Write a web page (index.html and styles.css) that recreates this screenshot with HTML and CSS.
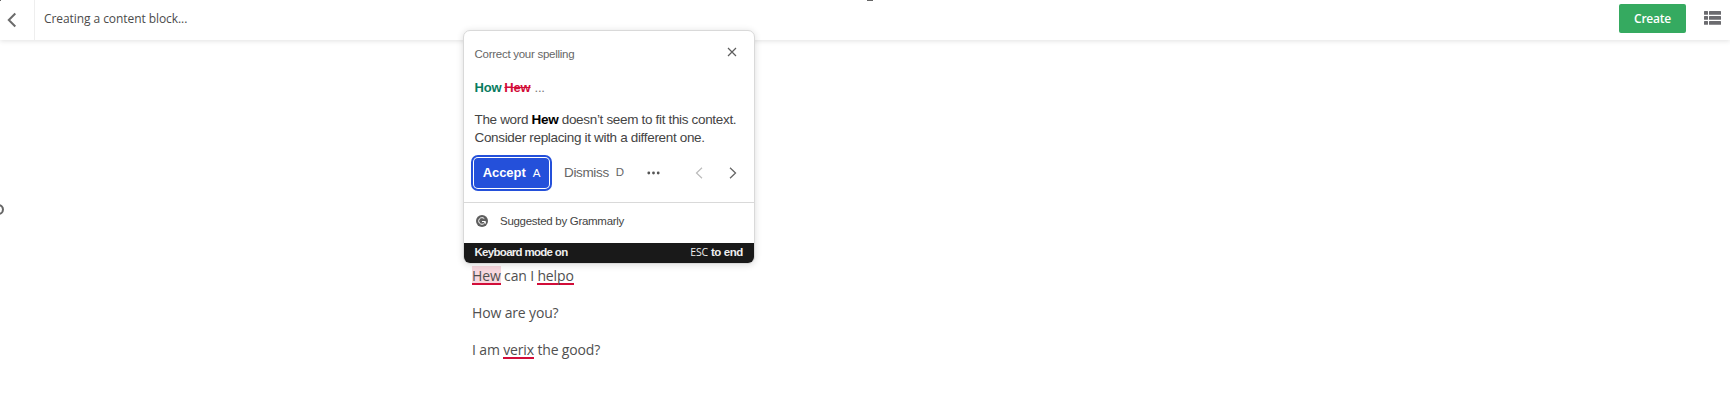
FILE: index.html
```html
<!DOCTYPE html>
<html lang="en">
<head>
<meta charset="utf-8">
<title>Creating a content block</title>
<link rel="stylesheet" href="styles.css">
</head>
<body>
<header class="topbar">
  <div class="back"><svg width="10" height="16" viewBox="0 0 10 16"><path d="M8.3 1.5 1.8 8l6.5 6.5" fill="none" stroke="#6b6b6b" stroke-width="2"/></svg></div>
  <div class="page-title"><span>Creating a content block...</span></div>
  <button class="create">Create</button>
  <svg class="list-icon" width="17" height="14" viewBox="0 0 17 14" fill="#6b6b6f"><rect width="4" height="3.7" rx=".5"/><rect x="5" width="12" height="3.7" rx=".5"/><rect y="5" width="4" height="3.7" rx=".5"/><rect x="5" y="5" width="12" height="3.7" rx=".5"/><rect y="10" width="4" height="3.7" rx=".5"/><rect x="5" y="10" width="12" height="3.7" rx=".5"/></svg>
</header>
<main class="editor">
  <p><span class="error active">Hew</span> can I <span class="error">helpo</span></p>
  <p>How are you?</p>
  <p>I am <span class="error">verix</span> the good?</p>
</main>
<section class="card">
  <div class="card-head"><span class="heading">Correct your spelling</span><svg width="10" height="10" viewBox="0 0 10 10"><path d="M1 1l8 8M9 1 1 9" stroke="#5d5d5d" stroke-width="1.2"/></svg></div>
  <div class="change"><b class="new">How</b><b class="old">Hew</b><span class="rest">...</span></div>
  <div class="explain"><div class="line1">The word <b>Hew</b> doesn’t seem to fit this context.</div><div class="line2">Consider replacing it with a different one.</div></div>
  <div class="actions">
    <button class="accept"><b>Accept</b><span>A</span></button>
    <div class="dismiss"><span>Dismiss</span><span class="key">D</span></div>
    <svg class="more" width="13" height="4" viewBox="0 0 13 4" fill="#555"><circle cx="1.8" cy="2" r="1.4"/><circle cx="6.5" cy="2" r="1.4"/><circle cx="11.2" cy="2" r="1.4"/></svg>
    <svg class="prev" width="8" height="12" viewBox="0 0 8 12"><path d="M7 .8 1.5 6 7 11.2" fill="none" stroke="#bbb" stroke-width="1.2"/></svg>
    <svg class="next" width="8" height="12" viewBox="0 0 8 12"><path d="M1 .8 6.5 6 1 11.2" fill="none" stroke="#666" stroke-width="1.3"/></svg>
  </div>
  <div class="source"><svg width="12" height="12" viewBox="0 0 12 12"><circle cx="6" cy="6" r="6" fill="#5e5e5e"/><path d="M8.3 3.6A3.3 3.3 0 1 0 9.2 6.7M6 6.5h3.3v2.2" fill="none" stroke="#fff" stroke-width="1"/></svg><span>Suggested by Grammarly</span></div>
  <div class="keyboard"><span class="mode">Keyboard mode on</span><span class="esc"><span class="esc-key">ESC</span><b>to end</b></span></div>
</section>
<i class="edge-corner"></i><i class="edge-top"></i><i class="edge-left"></i>
</body>
</html>
```
FILE: styles.css
```css
* { box-sizing: border-box; }
body { margin: 0; height: 404px; overflow: hidden; position: relative; background: #fff; font-family: "Liberation Sans", Arial, sans-serif; color: #444; }
button { border: 0; padding: 0; font: inherit; }
svg { display: block; flex: none; }
.topbar { height: 40px; display: flex; align-items: center; padding-right: 9px; box-shadow: 0 1px 5px rgba(0,0,0,.12); font-family: "Open Sans", sans-serif; }
.back { width: 35px; height: 40px; padding: 12px 0 0 7px; border-right: 1px solid #eee; }
.page-title { margin-left: 9px; flex: 1; font-size: 12px; letter-spacing: -.07px; color: #4b4b4b; white-space: nowrap; padding-bottom: 2px; line-height: 16px; }
.create { width: 67px; height: 29px; margin: 0 18px 3px 0; border-radius: 2px; background: #35aa60; color: #fff; font-size: 12px; font-weight: 600; line-height: 29px; letter-spacing: -.25px; }
.list-icon { margin-bottom: 4px; }
.editor { padding: 222px 0 0 472px; font-family: "Open Sans", sans-serif; font-size: 14px; letter-spacing: -.15px; line-height: 28px; color: #505050; }
.editor p { margin: 0 0 9px; height: 28px; white-space: nowrap; }
.error { display: inline-block; height: 19px; line-height: 19px; border-bottom: 2px solid #d20d39; }
.active { background: #f7d8df; }
.card { position: absolute; left: 463px; top: 30px; width: 292px; height: 234px; border: 1px solid #d9d9d9; border-radius: 7px; background: #fff; box-shadow: 0 1px 7px rgba(0,0,0,.14); overflow: hidden; white-space: nowrap; }
.card-head { display: flex; justify-content: space-between; height: 43px; padding: 16px 17px 0 10.5px; font-size: 11.5px; letter-spacing: -.27px; line-height: 14px; color: #666; }
.change { height: 27px; display: flex; padding-left: 10.5px; font-size: 13px; letter-spacing: -.2px; line-height: 27px; }
.new { color: #087c60; margin-right: 3px; }
.old { color: #d20d39; text-decoration: line-through; }
.rest { margin-left: 4px; color: #777; }
.explain { height: 53px; padding: 10px 0 0 10.5px; font-size: 13.5px; letter-spacing: -.33px; line-height: 18px; color: #444; }
.explain b { color: #000; }
.actions { height: 48px; display: flex; align-items: flex-start; padding-left: 10px; color: #666; }
.accept { display: flex; gap: 7px; justify-content: center; align-items: center; width: 75px; height: 30px; margin: 4px 0 0; border-radius: 4px; color: #fff; background: #2450da; box-shadow: 0 0 0 1px #fff, 0 0 0 3px #2450da; font-size: 13px; letter-spacing: -.05px; padding-bottom: 1px; }
.accept span, .key { font-size: 11.5px; }
.key { letter-spacing: 0; }
.dismiss { display: flex; gap: 7px; align-items: center; height: 30px; margin: 3px 0 0 15px; width: 62px; font-size: 13.5px; letter-spacing: -.35px; }
.more { margin: 17px 0 0 21px; }
.prev { margin: 13px 0 0 35px; }
.next { margin: 13px 0 0 26px; }
.source { border-top: 1px solid #d9d9d9; height: 41px; display: flex; align-items: center; gap: 12px; padding: 0 0 4px 12px; font-size: 11.5px; letter-spacing: -.29px; color: #444; }
.keyboard { height: 21px; display: flex; justify-content: space-between; padding: 0 11px 0 10.5px; background: #191919; color: #eee; font-size: 11.5px; line-height: 19px; }
.mode { font-weight: bold; letter-spacing: -.7px; }
.esc { display: flex; gap: 3px; letter-spacing: -.4px; }
.esc-key { font-family: "Open Sans", sans-serif; font-size: 10.5px; letter-spacing: -.2px; }
.edge-corner, .edge-top, .edge-left { position: absolute; background: #666; }
.edge-corner { left: 0; top: 0; width: 1px; height: 1px; }
.edge-top { left: 867px; top: 0; width: 6px; height: 1px; }
.edge-left { left: -8px; top: 204px; width: 12px; height: 11px; background: none; border: 2px solid #666; border-radius: 50%; }
```
